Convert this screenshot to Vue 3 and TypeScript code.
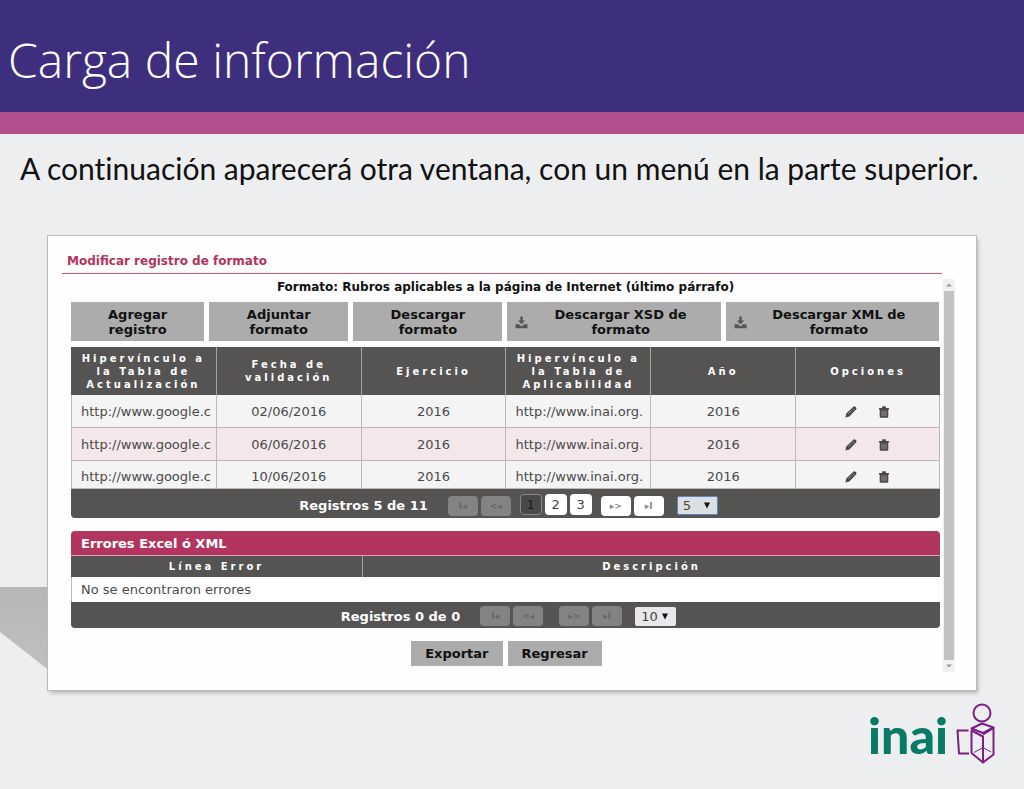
<script setup lang="ts">
import { ref } from 'vue'

interface Registro {
  actualizacion: string
  fecha: string
  ejercicio: number
  aplicabilidad: string
  anio: number
}

const acciones: { texto: string; descarga: boolean }[] = [
  { texto: 'Agregar registro', descarga: false },
  { texto: 'Adjuntar formato', descarga: false },
  { texto: 'Descargar formato', descarga: false },
  { texto: 'Descargar XSD de formato', descarga: true },
  { texto: 'Descargar XML de formato', descarga: true },
]

const columnas: string[] = [
  'Hipervínculo a la Tabla de Actualización',
  'Fecha de validación',
  'Ejercicio',
  'Hipervínculo a la Tabla de Aplicabilidad',
  'Año',
  'Opciones',
]

const registros: Registro[] = ['02/06/2016', '06/06/2016', '10/06/2016'].map((fecha) => ({
  actualizacion: 'http://www.google.c',
  fecha,
  ejercicio: 2016,
  aplicabilidad: 'http://www.inai.org.',
  anio: 2016,
}))

const pagina = ref(1)
const porPagina = ref('5')
const porPaginaErrores = ref('10')
</script>

<template>
  <div class="slide">
    <header class="banner">
      <h1>Carga de información</h1>
    </header>
    <p class="intro">A continuación aparecerá otra ventana, con un menú en la parte superior.</p>

    <main class="stage">
      <section class="panel">
        <h2>Modificar registro de formato</h2>
        <div class="viewport">
          <div class="content">
            <h3>Formato: Rubros aplicables a la página de Internet (último párrafo)</h3>

            <div class="actions">
              <button v-for="a in acciones" :key="a.texto" type="button" class="action">
                <svg v-if="a.descarga" class="download" viewBox="0 0 13 13" aria-hidden="true">
                  <path d="M5.3 0.5h2.4v4h2.500L6.500 8.300 2.800 4.500h2.500z" />
                  <path d="M0.500 8.300h3.300l2.700 2.200 2.700-2.200h3.300v3.900H0.500z" />
                </svg>
                <span>{{ a.texto }}</span>
              </button>
            </div>

            <table class="grid records">
              <thead>
                <tr>
                  <th v-for="c in columnas" :key="c" scope="col">{{ c }}</th>
                </tr>
              </thead>
              <tbody>
                <tr v-for="r in registros" :key="r.fecha">
                  <td class="link">{{ r.actualizacion }}</td>
                  <td>{{ r.fecha }}</td>
                  <td>{{ r.ejercicio }}</td>
                  <td class="link">{{ r.aplicabilidad }}</td>
                  <td>{{ r.anio }}</td>
                  <td>
                    <div class="tools">
                      <button type="button" aria-label="Editar">
                        <svg viewBox="0 0 12 12" aria-hidden="true">
                          <path d="M8.600 0.600q0.900-0.600 1.700 0.100l0.900 0.900q0.700 0.800 0 1.700L4.300 10.500 0.400 11.600l0.900-4z" />
                          <path class="cut" d="M3.300 7.800l3.400-3.500" />
                          <path class="cut" d="M7.400 2.300l2.300 2.400" />
                        </svg>
                      </button>
                      <button type="button" aria-label="Eliminar">
                        <svg viewBox="0 0 12 12" aria-hidden="true">
                          <path d="M1 1.900h3L4.400 0.300h3.200L8 1.900h3v1.600H1zM1.700 3.400h8.600v7.200q0 1.200-1.200 1.200H2.900Q1.700 11.800 1.700 10.600z" />
                          <path class="cut" d="M4 4.500v5.700M6 4.500v5.700M8 4.500v5.700" />
                        </svg>
                      </button>
                    </div>
                  </td>
                </tr>
              </tbody>
              <tfoot>
                <tr>
                  <td colspan="6">
                    <div class="pager">
                      <span class="count">Registros 5 de 11</span>
                      <span class="pair">
                        <button type="button" class="nav" disabled aria-label="Primera">I◂</button>
                        <button type="button" class="nav" disabled aria-label="Anterior">&lt;◂</button>
                      </span>
                      <span class="pages">
                        <button
                          v-for="n in 3"
                          :key="n"
                          type="button"
                          class="page"
                          :class="{ current: n === pagina }"
                          @click="pagina = n"
                        >{{ n }}</button>
                      </span>
                      <span class="pair">
                        <button type="button" class="nav" aria-label="Siguiente">▸&gt;</button>
                        <button type="button" class="nav" aria-label="Última">▸I</button>
                      </span>
                      <span class="size focused">
                        <select v-model="porPagina" aria-label="Registros por página">
                          <option>5</option>
                          <option>10</option>
                        </select>
                        <svg viewBox="0 0 6 7" aria-hidden="true"><path d="M0 0.5h6L3 6.5z" /></svg>
                      </span>
                    </div>
                  </td>
                </tr>
              </tfoot>
            </table>

            <table class="grid errors">
              <caption>Errores Excel ó XML</caption>
              <thead>
                <tr>
                  <th scope="col" class="line">Línea Error</th>
                  <th scope="col">Descripción</th>
                </tr>
              </thead>
              <tbody>
                <tr>
                  <td colspan="2" class="empty">No se encontraron errores</td>
                </tr>
              </tbody>
              <tfoot>
                <tr>
                  <td colspan="2">
                    <div class="pager">
                      <span class="count">Registros 0 de 0</span>
                      <span class="pair">
                        <button type="button" class="nav" disabled aria-label="Primera">I◂</button>
                        <button type="button" class="nav" disabled aria-label="Anterior">&lt;◂</button>
                      </span>
                      <span class="pages none"></span>
                      <span class="pair">
                        <button type="button" class="nav" disabled aria-label="Siguiente">▸&gt;</button>
                        <button type="button" class="nav" disabled aria-label="Última">▸I</button>
                      </span>
                      <span class="size">
                        <select v-model="porPaginaErrores" aria-label="Errores por página">
                          <option>10</option>
                          <option>20</option>
                        </select>
                        <svg viewBox="0 0 6 7" aria-hidden="true"><path d="M0 0.5h6L3 6.5z" /></svg>
                      </span>
                    </div>
                  </td>
                </tr>
              </tfoot>
            </table>

            <div class="bottom">
              <button type="button">Exportar</button>
              <button type="button">Regresar</button>
            </div>
          </div>
          <div class="scrollbar" aria-hidden="true">
            <svg viewBox="0 0 12 12"><path d="M3 7.5l3-3 3 3z" /></svg>
            <div class="thumb"></div>
            <svg viewBox="0 0 12 12"><path d="M3 4.5l3 3 3-3z" /></svg>
          </div>
        </div>
      </section>
    </main>

    <footer class="brand">
      <span class="word">inai</span>
      <svg viewBox="0 0 40 62" aria-hidden="true">
        <circle cx="26" cy="10" r="8.500" />
        <path d="M15.500 25.500L26 20.500 37.500 24.500 27 30z" />
        <path d="M15.500 27.500L27 33.500V59.500L15.500 50z" />
        <path d="M27 31.500L37.500 25V51.500L27 59.500" />
        <path d="M12.500 27.500H1.500L3 50.500H13" />
        <path class="thin" d="M18 49.500L27 44.500 35 49" />
      </svg>
    </footer>
  </div>
</template>

<style>
html,
body {
  background: #edeef0;
}
</style>

<style scoped>
* {
  box-sizing: border-box;
}
.slide {
  position: relative;
  min-height: 100vh;
  overflow: hidden;
  background: #edeef0;
  font-family: "DejaVu Sans", sans-serif;
}
button,
select {
  font: inherit;
  margin: 0;
  padding: 0;
  border: 0;
  cursor: pointer;
}
.banner {
  background: #3e2e7e;
  border-bottom: 22px solid #b1508c;
  padding: 30px 8px 22px;
}
.banner h1 {
  margin: 0;
  color: #fff;
  font: 300 48px/60px "Open Sans", sans-serif;
}
.intro {
  margin: 0;
  padding: 16px 20px 0;
  color: #111;
  font: 30px/36px Lato, sans-serif;
  font-variant-ligatures: none;
}
.stage {
  position: relative;
  padding: 49px 47px 0;
}
.stage::before {
  content: "";
  position: absolute;
  left: -20px;
  bottom: 12px;
  width: 80px;
  height: 92px;
  background: linear-gradient(#b5b6b8, #c0c1c3);
  clip-path: polygon(0 0, 100% 0, 100% 100%, 0 32%);
}
.panel {
  position: relative;
  background: #fefefe;
  border: 1px solid #b9babc;
  box-shadow: 2px 3px 4px -1px #b0b1b3;
  padding: 17px 21px 18px 14px;
}
.panel h2 {
  margin: 0 13px 5px 0;
  padding: 0 5px 4px;
  border-bottom: 1px solid #cf5475;
  color: #b2345d;
  font-size: 12px;
  line-height: 16px;
}
.viewport {
  display: flex;
  gap: 2px;
}
.content {
  flex: 1;
  min-width: 0;
  padding: 0 1px 6px 9px;
}
.content h3 {
  margin: 0 0 6px;
  text-align: center;
  font-size: 12px;
  line-height: 17px;
  color: #111;
}
.actions {
  display: grid;
  grid-template-columns: 133fr 139fr 149fr 213fr 213fr;
  gap: 5px;
  margin: 0 1px 6px 0;
}
.action {
  display: flex;
  align-items: center;
  justify-content: center;
  padding: 5px 8px 4px;
  background: #acacac;
  color: #111;
  font-weight: bold;
  font-size: 13px;
  line-height: 15px;
}
.action span {
  flex: 1;
  padding: 0 20px;
}
.action .download + span {
  padding: 0 12px;
}
.download {
  width: 13px;
  height: 13px;
  fill: #555;
}
.grid {
  width: 100%;
  table-layout: fixed;
  border-spacing: 0;
  border-radius: 0 0 4px 4px;
  overflow: hidden;
  color: #4a4a4a;
  font-size: 13px;
}
th {
  padding: 0 8px;
  background: #565353;
  color: #fff;
  font-size: 10px;
  line-height: 13px;
  letter-spacing: 3px;
}
th + th {
  border-left: 1px solid #a5a2a2;
}
.records th {
  height: 48px;
}
.records tbody td {
  height: 33px;
  padding: 1px 0 0;
  background: #f4f4f4;
  border-left: 1px solid #bfb8b9;
  border-bottom: 1px solid #bfb8b9;
  text-align: center;
  line-height: 18px;
}
.records tbody td:last-child {
  border-right: 1px solid #bfb8b9;
}
.records tbody tr:nth-child(2) td {
  background: #f3e7ea;
}
.records tbody tr:last-child td {
  height: 28px;
  padding-top: 4px;
}
.records tbody td.link {
  padding-left: 9px;
  text-align: left;
  white-space: nowrap;
}
.tools {
  display: flex;
  justify-content: center;
  gap: 21px;
}
.tools button {
  width: 12px;
  height: 12px;
  background: none;
}
.tools svg {
  display: block;
  width: 12px;
  height: 12px;
  fill: #4b4749;
}
.tools .cut {
  fill: none;
  stroke: #aaa6a8;
  stroke-width: 0.8;
}
tfoot td {
  padding: 0;
  background: #565353;
}
.pager {
  display: flex;
  align-items: center;
  justify-content: center;
  height: 29px;
  padding: 4px 0 0 6px;
  color: #fff;
}
.errors .pager {
  height: 26px;
  padding-top: 2px;
}
.count {
  margin-right: 20px;
  font-weight: bold;
}
.pair,
.pages {
  display: flex;
  gap: 3px;
}
.pages {
  margin: 0 9px;
  padding-bottom: 3px;
}
.pages.none {
  width: 0;
  margin: 0 8px;
}
.nav {
  width: 30px;
  height: 20px;
  border-radius: 4px;
  background: #fff;
  color: #888;
  font-weight: bold;
  font-size: 9px;
  line-height: 20px;
}
.nav:disabled {
  background: #848282;
  color: #686666;
}
.page {
  width: 22px;
  height: 21px;
  border-radius: 4px;
  background: #fff;
  color: #444;
  line-height: 21px;
}
.page.current {
  background: #4a4848;
  color: #1c1c1c;
  border: 1px solid #8a8888;
  line-height: 19px;
}
.size {
  position: relative;
  width: 41px;
  height: 19px;
  margin-left: 13px;
}
.size select {
  appearance: none;
  display: block;
  width: 100%;
  height: 100%;
  padding-left: 6px;
  border-radius: 2px;
  background: #e8e8e8;
  color: #444;
  line-height: 19px;
}
.size.focused select {
  padding-left: 5px;
  border: 1px solid #5f86c4;
  background: #dcdfe2;
  line-height: 17px;
}
.size svg {
  position: absolute;
  right: 8px;
  top: 6px;
  width: 6px;
  height: 7px;
  fill: #111;
  pointer-events: none;
}
.errors {
  margin-top: 13px;
}
.errors caption {
  padding: 4px 10px 3px;
  background: #b1355f;
  border-bottom: 1px solid #d9a0b2;
  border-radius: 4px 4px 0 0;
  color: #fff;
  font-weight: bold;
  text-align: left;
  line-height: 17px;
}
.errors th {
  height: 21px;
}
.errors .line {
  width: 33.5%;
}
.errors .empty {
  height: 25px;
  padding: 0 9px;
  border-left: 1px solid #bfb8b9;
  background: #fff;
}
.bottom {
  display: flex;
  justify-content: center;
  gap: 5px;
  margin: 13px 0 0 2px;
}
.bottom button {
  padding: 4px 14px;
  background: #acacac;
  color: #111;
  font-weight: bold;
  font-size: 13px;
  line-height: 17px;
}
.scrollbar {
  display: flex;
  flex-direction: column;
  width: 12px;
  background: #f1f1f1;
}
.scrollbar svg {
  width: 12px;
  height: 12px;
  fill: #999;
}
.thumb {
  flex: 1;
  margin: 0 1px;
  background: #c1c1c1;
}
.brand {
  display: flex;
  justify-content: flex-end;
  gap: 8px;
  padding: 12px 28px 20px;
}
.brand .word {
  color: #087a65;
  font: 900 50px/64px Lato, sans-serif;
}
.brand svg {
  width: 40px;
  height: 62px;
  fill: none;
  stroke: #7b2084;
  stroke-width: 2;
  stroke-linejoin: round;
}
.brand .thin {
  stroke-width: 1;
}
</style>
